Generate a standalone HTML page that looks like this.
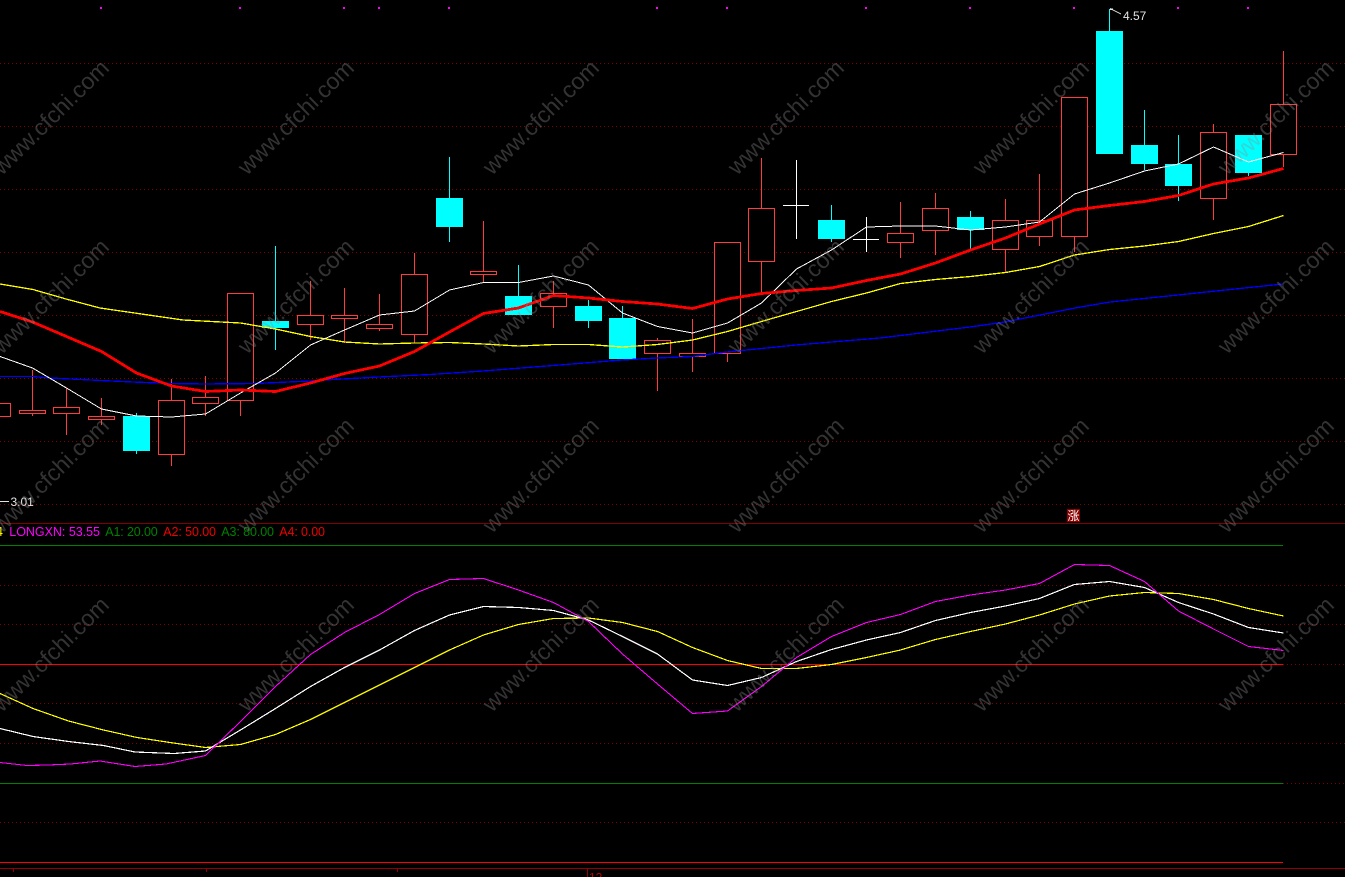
<!DOCTYPE html>
<html lang="zh">
<head>
<meta charset="utf-8">
<title>K线图</title>
<style>
html,body{margin:0;padding:0;background:#000;width:1345px;height:877px;overflow:hidden}
svg{display:block;position:absolute;left:0;top:0}
text{font-family:"Liberation Sans","Noto Sans CJK SC",sans-serif}
.g{stroke:#800000;stroke-width:1;stroke-dasharray:1 3;fill:none}
.r{stroke:#ff3c3c;stroke-width:1;fill:#000}
.w{stroke:#ff3c3c;stroke-width:1;fill:none}
.cw{stroke:#00ffff;stroke-width:1;fill:none}
.c{fill:#00ffff;stroke:none}
.l{fill:none;stroke-linejoin:round}
.wm{font-size:23px;fill:#8c8c8c;fill-opacity:.36}
</style>
</head>
<body>
<svg width="1345" height="877" viewBox="0 0 1345 877" xmlns="http://www.w3.org/2000/svg">
<rect width="1345" height="877" fill="#000"/>

<g shape-rendering="crispEdges">
<path class="g" d="M0 63.5H1345M0 126.5H1345M0 189.5H1345M0 252.5H1345M0 315.5H1345M0 378.5H1345M0 441.5H1345M0 504.5H1345"/>
<path class="g" d="M0 585.5H1345M0 624.5H1345M0 703.5H1345M0 743.5H1345M0 822.5H1345M1283 664.5H1345M1283 783.5H1345"/>
<path d="M0 523.5H1345" stroke="#800000" fill="none"/>
<path d="M0 545.5H1283M0 783.5H1283" stroke="#008000" fill="none"/>
<path d="M0 664.5H1283M0 862.5H1283" stroke="#ff0000" fill="none"/>
<path d="M0 868.5H1345M13.5 868V872M206.5 868V872M397.5 868V872M587.5 868V877" stroke="#900000" fill="none"/>
<g fill="#ff00ff">
<rect x="100" y="7" width="2" height="2"/><rect x="239" y="7" width="2" height="2"/><rect x="343" y="7" width="2" height="2"/><rect x="378" y="7" width="2" height="2"/><rect x="448" y="7" width="2" height="2"/><rect x="656" y="7" width="2" height="2"/><rect x="726" y="7" width="2" height="2"/><rect x="865" y="7" width="2" height="2"/><rect x="969" y="7" width="2" height="2"/><rect x="1073" y="7" width="2" height="2"/><rect x="1177" y="7" width="2" height="2"/><rect x="1247" y="7" width="2" height="2"/>
</g>

<!-- red wicks -->
<path class="w" d="M32.5 370V410M32.5 414V416M66.5 388V407M66.5 414V435M101.5 398V416M101.5 420V425M171.5 379V400M171.5 455V466M205.5 376V397M205.5 404V416M240.5 401V416M310.5 281V315M310.5 325V340M344.5 288V315M344.5 319V343M379.5 294V324M379.5 329V331M414.5 253V274M414.5 334V343M483.5 221V271M483.5 275V283M553.5 281V293M553.5 307V328M657.5 338V340M657.5 354V391M692.5 319V353M692.5 357V372M727.5 354V362M761.5 158V208M761.5 262V293M900.5 202V233M900.5 243V258M935.5 193V208M935.5 231V255M1005.5 199V220M1005.5 250V273M1039.5 174V220M1039.5 237V246M1074.5 237V252M1213.5 124V132M1213.5 199V220M1283.5 51V104M1283.5 155V167"/>
<!-- red bodies -->
<rect class="r" x="-15.5" y="403.5" width="26" height="13"/>
<rect class="r" x="19.5" y="410.5" width="26" height="3"/>
<rect class="r" x="53.5" y="407.5" width="26" height="6"/>
<rect class="r" x="88.5" y="416.5" width="26" height="3"/>
<rect class="r" x="158.5" y="400.5" width="26" height="54"/>
<rect class="r" x="192.5" y="397.5" width="26" height="6"/>
<rect class="r" x="227.5" y="293.5" width="26" height="107"/>
<rect class="r" x="297.5" y="315.5" width="26" height="9"/>
<rect class="r" x="331.5" y="315.5" width="26" height="3"/>
<rect class="r" x="366.5" y="324.5" width="26" height="4"/>
<rect class="r" x="401.5" y="274.5" width="26" height="60"/>
<rect class="r" x="470.5" y="271.5" width="26" height="3"/>
<rect class="r" x="540.5" y="293.5" width="26" height="13"/>
<rect class="r" x="644.5" y="340.5" width="26" height="13"/>
<rect class="r" x="679.5" y="353.5" width="26" height="3"/>
<rect class="r" x="714.5" y="242.5" width="26" height="111"/>
<rect class="r" x="748.5" y="208.5" width="26" height="53"/>
<rect class="r" x="887.5" y="233.5" width="26" height="9"/>
<rect class="r" x="922.5" y="208.5" width="26" height="22"/>
<rect class="r" x="992.5" y="220.5" width="26" height="29"/>
<rect class="r" x="1026.5" y="220.5" width="26" height="16"/>
<rect class="r" x="1061.5" y="97.5" width="26" height="139"/>
<rect class="r" x="1200.5" y="132.5" width="26" height="66"/>
<rect class="r" x="1270.5" y="104.5" width="26" height="50"/>

<!-- cyan wicks -->
<path class="cw" d="M136.5 413V454M275.5 246V350M449.5 157V242M518.5 265V315M588.5 300V328M622.5 306V318M831.5 205V242M970.5 211V249M1109.5 9V31M1144.5 110V170M1178.5 135V201M1248.5 172V176"/>
<!-- cyan bodies -->
<rect class="c" x="123" y="416" width="27" height="35"/>
<rect class="c" x="262" y="321" width="27" height="7"/>
<rect class="c" x="436" y="198" width="27" height="29"/>
<rect class="c" x="505" y="296" width="27" height="19"/>
<rect class="c" x="575" y="306" width="27" height="15"/>
<rect class="c" x="609" y="318" width="27" height="41"/>
<rect class="c" x="818" y="220" width="27" height="19"/>
<rect class="c" x="957" y="217" width="27" height="13"/>
<rect class="c" x="1096" y="31" width="27" height="123"/>
<rect class="c" x="1131" y="145" width="27" height="19"/>
<rect class="c" x="1165" y="164" width="27" height="22"/>
<rect class="c" x="1235" y="135" width="27" height="38"/>

<!-- white crosses -->
<path d="M796.5 160V239M783 205.5H809M866.5 217V252M853 239.5H879" stroke="#fff" fill="none"/>

<!-- MA lines -->
<polyline class="l" stroke="#0000ff" stroke-width="1.3" points="0,376.5 32,376.5 50,378 101,380.5 133,382 171,383.5 205,384 255,383.5 310,381 333,379.5 379,377 430,374.5 483,371 553,365.5 622,360 657,358 692,356.5 727,352 796,345 880,338 970,327 1005,322 1040,315 1075,308 1110,302 1178,295 1235,289 1283,284"/>
<polyline class="l" stroke="#ffff00" stroke-width="1.3" points="0,284 33,289.5 66,299 100,308 183,320 240.5,323 275.5,329 310.5,336.5 344.5,342 379.5,344 414.5,343 449.5,342.5 483.5,344 518.5,346 553.5,344.5 588.5,344.5 622.5,347 657.5,344.5 692.5,340 727.5,331.5 761.5,321.5 796.5,311.5 831.5,301.5 866.5,293 900.5,283.5 935.5,279.5 970.5,276.5 1005.5,272.5 1039.5,266.5 1074.5,255 1109.5,249.5 1144.5,246 1178.5,241.5 1213.5,233.5 1248.5,226.5 1283.5,215.5"/>
<polyline class="l" stroke="#ffffff" stroke-width="1" points="0,356.5 32.5,368 66.5,388 101.5,409 136.5,416 171.5,417 205.5,414 240.5,393 275.5,373 310.5,345 344.5,330 379.5,315 414.5,311 449.5,290 483.5,282.5 518.5,282.5 553.5,276 588.5,285 622.5,313 657.5,326.5 692.5,333 727.5,323 761.5,303 796.5,269 831.5,250 866.5,227 900.5,226 935.5,226 970.5,230 1005.5,227 1039.5,222 1074.5,194 1109.5,183 1144.5,171 1178.5,164 1213.5,147 1248.5,162 1283.5,152.5"/>
<polyline class="l" stroke="#ff0000" stroke-width="2.8" points="0,311.5 32.5,322 66.5,336.5 101.5,351.5 136.5,373 171.5,386 205.5,391.5 240.5,390 275.5,391.5 310.5,383 344.5,373.5 379.5,366 414.5,351.5 449.5,332 483.5,313.5 518.5,308 553.5,295.5 588.5,298 622.5,301.5 657.5,304 692.5,308.5 727.5,299 761.5,293.5 796.5,290.5 831.5,288 866.5,280.5 900.5,274 935.5,263 970.5,250 1005.5,238 1039.5,224 1074.5,210 1109.5,205.5 1144.5,201.5 1178.5,195.5 1213.5,184 1248.5,178 1283.5,168.5"/>

<!-- lower pane -->
<polyline class="l" stroke="#ffff00" stroke-width="1.2" points="0,693.5 33,708.5 68.5,721 103.5,730 137,737.5 170,742.5 205.5,747.5 240.5,744.5 275.5,734.5 310.5,719.5 344.5,702.5 379.5,685 414.5,667.5 449.5,650 483.5,635 518.5,624.5 553.5,618.5 588.5,618 622.5,622.5 657.5,631.5 692.5,647.5 727.5,660.5 761.5,668.5 796.5,668.5 831.5,664.5 866.5,657.5 900.5,650 935.5,639.5 970.5,631.5 1005.5,624 1039.5,615 1074.5,604 1109.5,596 1144.5,592.5 1178.5,593.5 1213.5,599.5 1248.5,608.5 1283.5,616"/>
<polyline class="l" stroke="#ffffff" stroke-width="1.2" points="0,728.5 33,736.5 68.5,741.5 103.5,745.5 135,752 174,753.5 205.5,751 240.5,730 275.5,708.5 310.5,686.5 344.5,667.5 379.5,650 414.5,630.5 449.5,615 483.5,606.5 518.5,607.5 553.5,610.5 588.5,620 622.5,636.5 657.5,654 692.5,680 727.5,685.5 761.5,677.5 796.5,661.5 831.5,649.5 866.5,640 900.5,632.5 935.5,620.5 970.5,612.5 1005.5,606 1039.5,598.5 1074.5,584.5 1109.5,581.5 1144.5,587.5 1178.5,602.5 1213.5,614 1248.5,627.5 1283.5,633"/>
<polyline class="l" stroke="#ff00ff" stroke-width="1.1" points="0,762.5 27,765.5 48,765 70.5,764 100,761 135,766.5 166,764 205.5,755.5 240.5,721.5 275.5,686.5 310.5,654.5 344.5,632.5 379.5,614.5 414.5,593.5 449.5,579.5 483.5,578.5 518.5,590 553.5,602.5 588.5,621.5 622.5,654 657.5,684 692.5,713.5 727.5,711 761.5,686.5 796.5,657.5 831.5,636.5 866.5,622.5 900.5,614.5 935.5,601.5 970.5,595 1005.5,590 1039.5,583.5 1074.5,564.5 1109.5,565.5 1144.5,581.5 1178.5,611 1213.5,629 1248.5,646.5 1283.5,650.5"/>

<rect x="1067" y="509" width="13" height="13" fill="#8a0000"/>
<path d="M1110 9.5L1113 9M1110 8.5L1121 14" stroke="#e8e8e8" fill="none"/>
<path d="M0 501.5H9" stroke="#e0e0e0" fill="none"/>
</g>

<!-- text -->
<text x="1123" y="20" font-size="12" fill="#e4e4e4">4.57</text>
<text x="10.5" y="506" font-size="12" fill="#e4e4e4">3.01</text>
<text x="-4" y="536" font-size="12.5" fill="#ffff00">4</text>
<text x="9.3" y="536" font-size="12.5" fill="#ff00ff" textLength="90.7" lengthAdjust="spacing">LONGXN: 53.55</text>
<text x="105.3" y="536" font-size="12.5" fill="#008000" textLength="52.4" lengthAdjust="spacing">A1: 20.00</text>
<text x="163.3" y="536" font-size="12.5" fill="#f00000" textLength="52.7" lengthAdjust="spacing">A2: 50.00</text>
<text x="221.3" y="536" font-size="12.5" fill="#008000" textLength="52.7" lengthAdjust="spacing">A3: 80.00</text>
<text x="279.3" y="536" font-size="12.5" fill="#f00000" textLength="45.7" lengthAdjust="spacing">A4: 0.00</text>
<text x="589" y="881.5" font-size="12" fill="#c00000">12</text>
<text x="1073.5" y="520" font-size="12" text-anchor="middle" fill="#fff" style="font-family:'WenQuanYi Zen Hei','Noto Sans CJK SC',sans-serif">涨</text>

<!-- watermark -->
<g class="wm">
<text transform="translate(2 176) rotate(-44.5)">www.cfchi.com</text>
<text transform="translate(247 176) rotate(-44.5)">www.cfchi.com</text>
<text transform="translate(492 176) rotate(-44.5)">www.cfchi.com</text>
<text transform="translate(737 176) rotate(-44.5)">www.cfchi.com</text>
<text transform="translate(982 176) rotate(-44.5)">www.cfchi.com</text>
<text transform="translate(1227 176) rotate(-44.5)">www.cfchi.com</text>
<text transform="translate(2 355) rotate(-44.5)">www.cfchi.com</text>
<text transform="translate(247 355) rotate(-44.5)">www.cfchi.com</text>
<text transform="translate(492 355) rotate(-44.5)">www.cfchi.com</text>
<text transform="translate(737 355) rotate(-44.5)">www.cfchi.com</text>
<text transform="translate(982 355) rotate(-44.5)">www.cfchi.com</text>
<text transform="translate(1227 355) rotate(-44.5)">www.cfchi.com</text>
<text transform="translate(2 534) rotate(-44.5)">www.cfchi.com</text>
<text transform="translate(247 534) rotate(-44.5)">www.cfchi.com</text>
<text transform="translate(492 534) rotate(-44.5)">www.cfchi.com</text>
<text transform="translate(737 534) rotate(-44.5)">www.cfchi.com</text>
<text transform="translate(982 534) rotate(-44.5)">www.cfchi.com</text>
<text transform="translate(1227 534) rotate(-44.5)">www.cfchi.com</text>
<text transform="translate(2 713) rotate(-44.5)">www.cfchi.com</text>
<text transform="translate(247 713) rotate(-44.5)">www.cfchi.com</text>
<text transform="translate(492 713) rotate(-44.5)">www.cfchi.com</text>
<text transform="translate(737 713) rotate(-44.5)">www.cfchi.com</text>
<text transform="translate(982 713) rotate(-44.5)">www.cfchi.com</text>
<text transform="translate(1227 713) rotate(-44.5)">www.cfchi.com</text>
</g>
</svg>
</body>
</html>
